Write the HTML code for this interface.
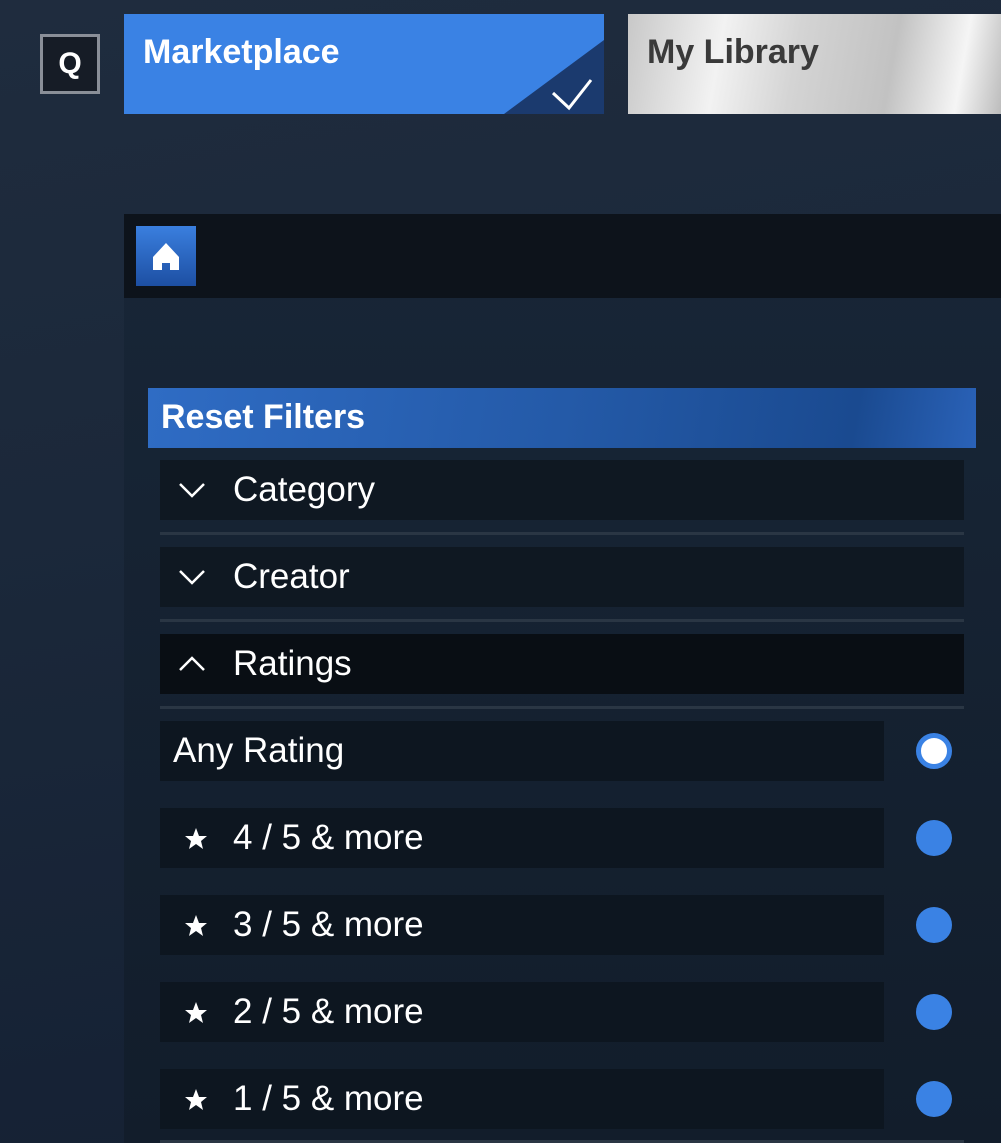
<!DOCTYPE html>
<html><head><meta charset="utf-8"><style>
*{margin:0;padding:0;box-sizing:border-box}
html,body{width:1001px;height:1143px;overflow:hidden}
body{background:linear-gradient(170deg,#1f2c3e 0%,#1b283a 40%,#142033 100%);font-family:"Liberation Sans",sans-serif;position:relative;color:#fff}
.abs{position:absolute}
.q{left:40px;top:34px;width:60px;height:60px;border:3px solid #8a8f98;background:#161c26;font-weight:bold;font-size:30px;text-align:center;line-height:54px}
.mk{left:124px;top:14px;width:480px;height:100px;background:#3a82e4;overflow:hidden}
.mk span{position:absolute;left:19px;top:19px;font-size:34px;font-weight:bold}
.lib{left:628px;top:14px;width:373px;height:100px;background:linear-gradient(100deg,#c8c8c8 0%,#f2f2f2 25%,#d4d4d4 45%,#c2c2c2 70%,#f5f5f5 88%,#bcbcbc 100%)}
.lib span{position:absolute;left:19px;top:19px;font-size:34px;font-weight:bold;color:#3a3a3a}
.panel{left:124px;top:214px;width:877px;height:929px;background:linear-gradient(180deg,#182637,#121d2b)}
.hdr{left:124px;top:214px;width:877px;height:84px;background:#0d131b}
.home{left:136px;top:226px;width:60px;height:60px;background:linear-gradient(180deg,#3a7fdf,#1d4fa3)}
.reset{left:148px;top:388px;width:828px;height:60px;background:linear-gradient(100deg,#2f6cc4 0%,#245aa8 50%,#1a4a90 85%,#2a62b8 100%)}
.reset span{position:absolute;left:13px;top:10px;font-size:34px;font-weight:bold}
.row{left:160px;width:804px;height:60px;background:#0f1822}
.row span{position:absolute;left:73px;top:10px;font-size:35px}
.sep{left:160px;width:804px;height:3px;background:#2a3644}
.opt{left:160px;width:724px;height:60px;background:#0d1620}
.opt span{position:absolute;left:73px;top:10px;font-size:35px}
.dot{left:916px;width:36px;height:36px;border-radius:50%;background:#3a82e4}
</style></head><body>
<div class="abs q">Q</div>
<div class="abs mk"><span>Marketplace</span>
<svg class="abs" style="left:0;top:0" width="480" height="100"><polygon points="480,26 480,100 380,100" fill="#1b3a6e"/><polyline points="429,79 445,94 467,66" fill="none" stroke="#fff" stroke-width="3"/></svg></div>
<div class="abs lib"><span>My Library</span></div>
<div class="abs panel"></div>
<div class="abs hdr"></div>
<div class="abs home"><svg width="60" height="60"><path d="M30 17 L43 31 L43 44 L34 44 L34 37 L26 37 L26 44 L17 44 L17 31 Z" fill="#fff"/></svg></div>
<div class="abs reset"><span>Reset Filters</span></div>

<div class="abs row" style="top:460px"><svg class="abs" style="left:18px;top:20px" width="28" height="20"><polyline points="2,4 14,16 26,4" fill="none" stroke="#fff" stroke-width="2.5"/></svg><span>Category</span></div>
<div class="abs sep" style="top:532px"></div>
<div class="abs row" style="top:547px"><svg class="abs" style="left:18px;top:20px" width="28" height="20"><polyline points="2,4 14,16 26,4" fill="none" stroke="#fff" stroke-width="2.5"/></svg><span>Creator</span></div>
<div class="abs sep" style="top:619px"></div>
<div class="abs row" style="top:634px;background:#090e14"><svg class="abs" style="left:18px;top:20px" width="28" height="20"><polyline points="2,16 14,4 26,16" fill="none" stroke="#fff" stroke-width="2.5"/></svg><span>Ratings</span></div>
<div class="abs sep" style="top:706px"></div>

<div class="abs opt" style="top:721px"><span style="left:13px">Any Rating</span></div>
<div class="abs dot" style="top:733px;border:5px solid #3a82e4;background:#fff"></div>

<div class="abs opt" style="top:808px"><svg class="abs" style="left:24px;top:19px" width="24" height="24"><polygon points="12,1 15,9 23,9 17,14 19,22 12,17 5,22 7,14 1,9 9,9" fill="#fff"/></svg><span>4 / 5 &amp; more</span></div>
<div class="abs dot" style="top:820px"></div>
<div class="abs opt" style="top:895px"><svg class="abs" style="left:24px;top:19px" width="24" height="24"><polygon points="12,1 15,9 23,9 17,14 19,22 12,17 5,22 7,14 1,9 9,9" fill="#fff"/></svg><span>3 / 5 &amp; more</span></div>
<div class="abs dot" style="top:907px"></div>
<div class="abs opt" style="top:982px"><svg class="abs" style="left:24px;top:19px" width="24" height="24"><polygon points="12,1 15,9 23,9 17,14 19,22 12,17 5,22 7,14 1,9 9,9" fill="#fff"/></svg><span>2 / 5 &amp; more</span></div>
<div class="abs dot" style="top:994px"></div>
<div class="abs opt" style="top:1069px"><svg class="abs" style="left:24px;top:19px" width="24" height="24"><polygon points="12,1 15,9 23,9 17,14 19,22 12,17 5,22 7,14 1,9 9,9" fill="#fff"/></svg><span>1 / 5 &amp; more</span></div>
<div class="abs dot" style="top:1081px"></div>
<div class="abs sep" style="top:1140px"></div>
</body></html>
